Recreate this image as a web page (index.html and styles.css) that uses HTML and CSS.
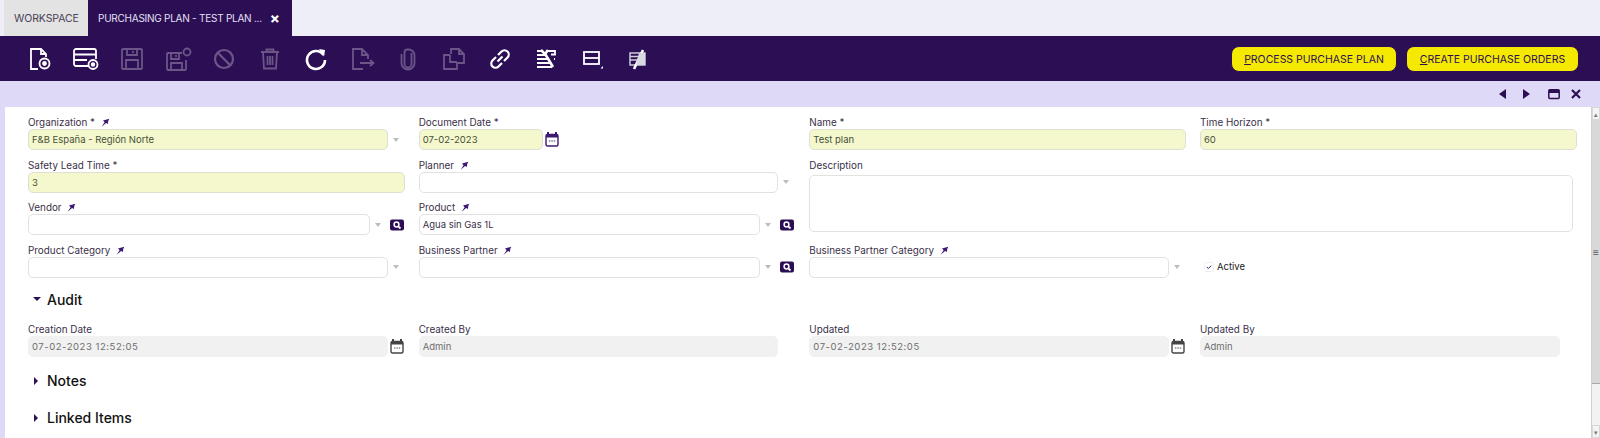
FILE: index.html
```html
<!DOCTYPE html>
<html lang="es">
<head>
    <meta charset="UTF-8">
    <title>Purchasing Plan</title>
    <link rel="stylesheet" href="styles.css">
</head>
<body>
    <svg class="defs" width="0" height="0">
        <symbol id="pin" viewBox="0 0 8 8"><path d="M.6 7.8 3.2 3.8 1.800 2.200 7.400.6 6.400 2.600 6.200 5.400 4.500 4.400Z" fill="currentColor"/></symbol>
        <symbol id="cal" viewBox="0 0 14 15"><path d="M3 0v2M11 0v2" stroke="currentColor" stroke-width="2"/><rect x="1" y="2.5" width="12" height="11.5" rx="1.5" fill="#fff" stroke="currentColor" stroke-width="1.4"/><path d="M1 2.500h12v3H1Z" fill="currentColor"/><path d="M4 9h1.400M6.400 9h1.400M8.800 9h1.400" stroke="currentColor" stroke-width="1"/></symbol>
        <symbol id="lens" viewBox="0 0 14 14"><rect width="14" height="11" y="1.5" rx="2" fill="#2c0e55"/><circle cx="6.5" cy="6.5" r="2.4" fill="none" stroke="#fff" stroke-width="1.5"/><path d="m8.300 8.300 2.200 2.200" stroke="#fff" stroke-width="1.8"/></symbol>
    </svg>

    <div class="tabs">
        <div class="tab tab-plain">WORKSPACE</div>
        <div class="tab tab-active"><span class="tab-title">PURCHASING PLAN - TEST PLAN ...</span><span class="tab-close">×</span></div>
    </div>

    <div class="toolbar">
        <div class="tools">
            <svg class="tool" viewBox="0 0 28 28"><path d="M12 24H5V4h10l5 5v3M15 4v5h5"/><circle cx="18.5" cy="18.5" r="5"/><circle cx="18.5" cy="18.5" r="1.5" fill="currentColor"/></svg>
            <svg class="tool" viewBox="0 0 28 28"><path d="M16 21H4a2 2 0 0 1-2-2V6a2 2 0 0 1 2-2h18a2 2 0 0 1 2 2v8M2 9.500h22M2 15h13"/><circle cx="21" cy="19.5" r="4.5"/><circle cx="21" cy="19.5" r="1.3" fill="currentColor"/></svg>
            <svg class="tool off" viewBox="0 0 28 28"><path d="M5 4h18a1 1 0 0 1 1 1v18a1 1 0 0 1-1 1H5a1 1 0 0 1-1-1V5a1 1 0 0 1 1-1ZM9 4v6h10V4M8 24v-9h12v9M15 6v2"/></svg>
            <svg class="tool off" viewBox="0 0 28 28"><path d="M18 8H4a1 1 0 0 0-1 1v15a1 1 0 0 0 1 1h17a1 1 0 0 0 1-1v-9M7 8v6h8V8M7 25v-7h11v7M12 10v2"/><circle cx="23" cy="7" r="3.5"/></svg>
            <svg class="tool off thick2" viewBox="0 0 28 28"><circle cx="14" cy="14" r="9"/><path d="m7.800 7.800 12.400 12.400"/></svg>
            <svg class="tool off" viewBox="0 0 28 28"><path d="M5 7h18M10.500 7V4.500h7V7M7 7l1 16.500h12L21 7M11.500 11v9M14 11v9M16.500 11v9"/></svg>
            <svg class="tool thick" viewBox="0 0 28 28"><path d="M21.500 10a9 9 0 1 0 1.500 5"/><path d="m17 4 6 1-1 6.500Z" fill="currentColor" stroke="none"/></svg>
            <svg class="tool off" viewBox="0 0 28 28"><path d="M15 24H5V4h9l6 6v4M14 4v6h6M12 18h13M22 15l3.500 3-3.500 3"/></svg>
            <svg class="tool off" viewBox="0 0 28 28"><path d="M17.500 8v11a3.500 3.500 0 0 1-7 0V7.500a3 3 0 0 1 3-3h1a6 6 0 0 1 6 6V18a6.500 6.500 0 0 1-13 0V9"/></svg>
            <svg class="tool off" viewBox="0 0 28 28"><path d="M10 10H4v14h13V17M10 10v7h7M11 9V4h8l5 5v9h-7M19 4v5h5"/></svg>
            <svg class="tool thick2" viewBox="0 0 28 28"><path d="m11.500 16.500 5-5M12 10l3.500-3.500a4 4 0 0 1 6 6L18 16M16 18l-3.500 3.500a4 4 0 0 1-6-6L10 12"/></svg>
            <svg class="tool" viewBox="0 0 28 28"><path d="M5 6h4M14 6h9v3.500h-4M5 10h8M5 14h11M22 14h1M5 18h13M5 22h15"/><path class="wrench" d="m9 5 3.500 3.500 1 1L21 22"/><path class="wrench" d="m13 9 3-4"/></svg>
            <svg class="tool" viewBox="0 0 28 28"><rect x="6" y="7" width="15" height="12"/><path d="M6 13h15"/><path class="tiny" d="M25 21v2.500h-2.500Z"/></svg>
            <svg class="tool" viewBox="0 0 28 28"><rect class="note" x="6" y="8" width="15" height="12"/><path class="note-line" d="M6 11.500h15M6 15h15"/><path class="wrench" d="M19 5 10 24"/><path class="note-fill" d="M15 8h6v12h-9Z"/></svg>
        </div>
        <div class="actions">
            <button class="action"><u>P</u>ROCESS PURCHASE PLAN</button>
            <button class="action action-wide"><u>C</u>REATE PURCHASE ORDERS</button>
        </div>
    </div>

    <div class="band">
        <svg class="band-icon" viewBox="0 0 10 12"><path d="M8 1v10L1 6Z" fill="currentColor"/></svg>
        <svg class="band-icon" viewBox="0 0 10 12"><path d="M2 1v10l7-5Z" fill="currentColor"/></svg>
        <svg class="band-icon band-max" viewBox="0 0 12 12"><rect x=".8" y="1.8" width="10.4" height="8.8" rx="1" fill="none" stroke="currentColor" stroke-width="1.5"/><path d="M1 2h10v3H1Z" fill="currentColor"/></svg>
        <svg class="band-icon band-x" viewBox="0 0 12 12"><path d="m2 2 8 8M10 2l-8 8" stroke="currentColor" stroke-width="2.2"/></svg>
    </div>

    <div class="window">
        <div class="content">
            <div class="form">
                <div class="field">
                    <label>Organization * <svg class="pin"><use href="#pin"/></svg></label>
                    <div class="row"><div class="input req">F&amp;B España - Región Norte</div><span class="arrow"></span></div>
                </div>
                <div class="field">
                    <label>Document Date *</label>
                    <div class="row"><div class="input req date">07-02-2023</div><svg class="cal"><use href="#cal"/></svg></div>
                </div>
                <div class="field">
                    <label>Name *</label>
                    <div class="row"><div class="input req">Test plan</div></div>
                </div>
                <div class="field">
                    <label>Time Horizon *</label>
                    <div class="row"><div class="input req">60</div></div>
                </div>

                <div class="field">
                    <label>Safety Lead Time *</label>
                    <div class="row"><div class="input req">3</div></div>
                </div>
                <div class="field">
                    <label>Planner <svg class="pin"><use href="#pin"/></svg></label>
                    <div class="row"><div class="input"></div><span class="arrow"></span></div>
                </div>
                <div class="field field-desc">
                    <label>Description</label>
                    <div class="textarea"></div>
                </div>

                <div class="field">
                    <label>Vendor <svg class="pin"><use href="#pin"/></svg></label>
                    <div class="row"><div class="input"></div><span class="arrow arrow-short"></span><svg class="lens"><use href="#lens"/></svg></div>
                </div>
                <div class="field">
                    <label>Product <svg class="pin"><use href="#pin"/></svg></label>
                    <div class="row"><div class="input">Agua sin Gas 1L</div><span class="arrow arrow-short"></span><svg class="lens"><use href="#lens"/></svg></div>
                </div>

                <div class="field">
                    <label>Product Category <svg class="pin"><use href="#pin"/></svg></label>
                    <div class="row"><div class="input"></div><span class="arrow"></span></div>
                </div>
                <div class="field">
                    <label>Business Partner <svg class="pin"><use href="#pin"/></svg></label>
                    <div class="row"><div class="input"></div><span class="arrow arrow-short"></span><svg class="lens"><use href="#lens"/></svg></div>
                </div>
                <div class="field">
                    <label>Business Partner Category <svg class="pin"><use href="#pin"/></svg></label>
                    <div class="row"><div class="input"></div><span class="arrow"></span></div>
                </div>
                <div class="field field-check">
                    <svg class="check" viewBox="0 0 10 10"><rect x=".5" y=".5" width="9" height="9" rx="2" fill="#fff" stroke="#eee"/><path d="m2.800 5 1.600 1.500 2.800-2.800" fill="none" stroke="#3d1a70" stroke-width="1"/></svg>
                    Active
                </div>
            </div>

            <div class="section section-open"><span class="tri tri-down"></span>Audit</div>
            <div class="form form-audit">
                <div class="field">
                    <label>Creation Date</label>
                    <div class="row"><div class="input ro stamp">07-02-2023 12:52:05</div><svg class="cal cal-grey"><use href="#cal"/></svg></div>
                </div>
                <div class="field">
                    <label>Created By</label>
                    <div class="row"><div class="input ro ro-short">Admin</div></div>
                </div>
                <div class="field">
                    <label>Updated</label>
                    <div class="row"><div class="input ro stamp">07-02-2023 12:52:05</div><svg class="cal cal-grey"><use href="#cal"/></svg></div>
                </div>
                <div class="field">
                    <label>Updated By</label>
                    <div class="row"><div class="input ro ro-short">Admin</div></div>
                </div>
            </div>
            <div class="section"><span class="tri tri-right"></span>Notes</div>
            <div class="section"><span class="tri tri-right"></span>Linked Items</div>
        </div>

        <div class="scrollbar">
            <div class="sb-btn">▴</div>
            <div class="sb-thumb">≡</div>
            <div class="sb-track"></div>
            <div class="sb-btn">▾</div>
        </div>
    </div>
</body>
</html>
```

FILE: styles.css
```css
* {
    box-sizing: border-box;
}

body {
    margin: 0;
    width: 1600px;
    height: 438px;
    overflow: hidden;
    font-family: Inter, 'Liberation Sans', sans-serif;
    font-size: 9.5px;
    color: #3a3048;
    background-color: #ded9f6;
}

.defs {
    position: absolute;
}

/* Tabs */
.tabs {
    display: flex;
    height: 36px;
    padding-left: 4px;
    background-color: #eeeef9;
}

.tab {
    display: flex;
    align-items: center;
    font-size: 10.5px;
    white-space: nowrap;
}

.tab-plain {
    width: 84px;
    padding-left: 10px;
    background-color: #e3e3e3;
    color: #4a4254;
    letter-spacing: -0.1px;
}

.tab-active {
    width: 204px;
    padding-left: 10px;
    background-color: #2c0e55;
    color: #e4e0f4;
}

.tab-title {
    font-size: 10px;
    letter-spacing: -0.25px;
}

.tab-close {
    margin-left: 8px;
    font-size: 15px;
    font-weight: 700;
    color: #fff;
}

/* Toolbar */
.toolbar {
    display: flex;
    align-items: center;
    justify-content: space-between;
    height: 45px;
    padding: 1px 21px 0 26px;
    background-color: #2c0e55;
}

.tools {
    display: flex;
    gap: 18px;
}

.tool {
    width: 28px;
    height: 28px;
    fill: none;
    stroke: currentColor;
    stroke-width: 1.8;
    color: #fff;
}

.off {
    color: #6b5687;
}

.thick {
    stroke-width: 2.6;
}

.thick2 {
    stroke-width: 2.2;
}

.wrench {
    stroke-width: 2.6;
}

.tiny {
    fill: currentColor;
    stroke: none;
}

.note {
    fill: #2c0e55;
    stroke: #d8d8e0;
    stroke-width: 1.4;
}

.note-line {
    stroke: #cfcbd8;
    stroke-width: 1.4;
}

.note-fill {
    fill: #d8d8e0;
    stroke: none;
}

.actions {
    display: flex;
    gap: 9px;
}

.action {
    width: 166px;
    height: 26px;
    padding: 0;
    border: 1px solid #2c0e55;
    border-radius: 8px;
    background-color: #f5e900;
    color: #2c0e55;
    font-family: inherit;
    font-size: 10.5px;
    white-space: nowrap;
}

.action-wide {
    width: 173px;
}

/* Band with the window buttons */
.band {
    display: flex;
    align-items: center;
    justify-content: flex-end;
    gap: 13px;
    height: 26px;
    padding-right: 18px;
    color: #2c0e55;
}

.band-icon {
    width: 10px;
    height: 12px;
}

.band-max {
    width: 12px;
    margin-left: 4px;
}

.band-x {
    width: 12px;
    margin-left: -3px;
}

/* Form window */
.window {
    display: flex;
    height: 331px;
    margin-left: 5px;
    background-color: #fff;
}

.content {
    flex: 1;
    padding: 7px 0 0 23px;
}

.form {
    display: grid;
    grid-template-columns: repeat(4, 390.67px);
    grid-auto-rows: 42.5px;
}

.field {
    display: flex;
    flex-direction: column;
    padding-right: 14px;
}

.field label {
    height: 15px;
    font-size: 9.9px;
    line-height: 16px;
    white-space: nowrap;
}

.pin {
    width: 9px;
    height: 9px;
    margin-left: 3px;
    vertical-align: -1px;
    color: #3d1a70;
}

.row {
    display: flex;
    align-items: center;
    height: 21px;
}

.input {
    flex: 1;
    height: 21px;
    padding-left: 3px;
    line-height: 19px;
    border: 1px solid #e2e2e2;
    border-radius: 5px;
    background-color: #fff;
    white-space: nowrap;
}

.req {
    background-color: #f5f8cc;
    color: #45503a;
    border-color: #dfdfd6;
}

.date {
    flex: none;
    width: 124px;
}

.ro {
    border-color: #f1f1f1;
    background-color: #f1f1f1;
    color: #6e6e6e;
}

.ro-short {
    margin-right: 17px;
}

.stamp {
    letter-spacing: 0.55px;
}

.arrow {
    width: 17px;
    height: 4px;
    position: relative;
}

.arrow::after {
    content: '';
    position: absolute;
    left: 5px;
    top: 0;
    border-left: 3.5px solid transparent;
    border-right: 3.5px solid transparent;
    border-top: 4px solid #bdbdbd;
}

.arrow-short {
    width: 20px;
}

.lens {
    width: 14px;
    height: 14px;
    margin-right: 1px;
}

.cal {
    width: 14px;
    height: 15px;
    margin-left: 2px;
    margin-right: 1px;
    color: #3d1a70;
}

.cal-grey {
    color: #444;
}

.field-desc {
    grid-column: 3 / 5;
    grid-row: 2 / 4;
    padding-right: 18px;
}

.textarea {
    height: 57px;
    margin-top: 3.5px;
    border: 1px solid #e2e2e2;
    border-radius: 5px;
}

.field-check {
    flex-direction: row;
    align-items: center;
    gap: 3px;
    padding: 8px 0 0 4px;
    color: #222;
}

.check {
    width: 10px;
    height: 10px;
}

/* Collapsible sections */
.section {
    display: flex;
    align-items: center;
    height: 37px;
    font-size: 14px;
    font-weight: 500;
    color: #111;
}

.section-open {
    height: 30px;
}

.form-audit {
    margin: 7px 0 5px;
    grid-auto-rows: 36px;
}

.tri {
    width: 0;
    height: 0;
}

.tri-down {
    margin-left: 5px;
    margin-right: 6px;
    border-left: 4px solid transparent;
    border-right: 4px solid transparent;
    border-top: 4px solid #2c0e55;
}

.tri-right {
    margin-left: 6px;
    margin-right: 9px;
    border-top: 4px solid transparent;
    border-bottom: 4px solid transparent;
    border-left: 4px solid #2c0e55;
}

/* Scrollbar */
.scrollbar {
    display: flex;
    flex-direction: column;
    width: 12px;
    background-color: #f2f2f2;
    border-left: 1px solid #d0d0d0;
}

.sb-btn {
    height: 13px;
    line-height: 13px;
    font-size: 7px;
    text-align: center;
    color: #777;
    background-color: #f4f4f4;
    border: 1px solid #d8d8d8;
}

.sb-thumb {
    display: flex;
    align-items: center;
    justify-content: center;
    height: 264px;
    font-size: 10px;
    color: #555;
    background-color: #d8d8d8;
    border-bottom: 1px solid #aaa;
}

.sb-track {
    flex: 1;
}
```
